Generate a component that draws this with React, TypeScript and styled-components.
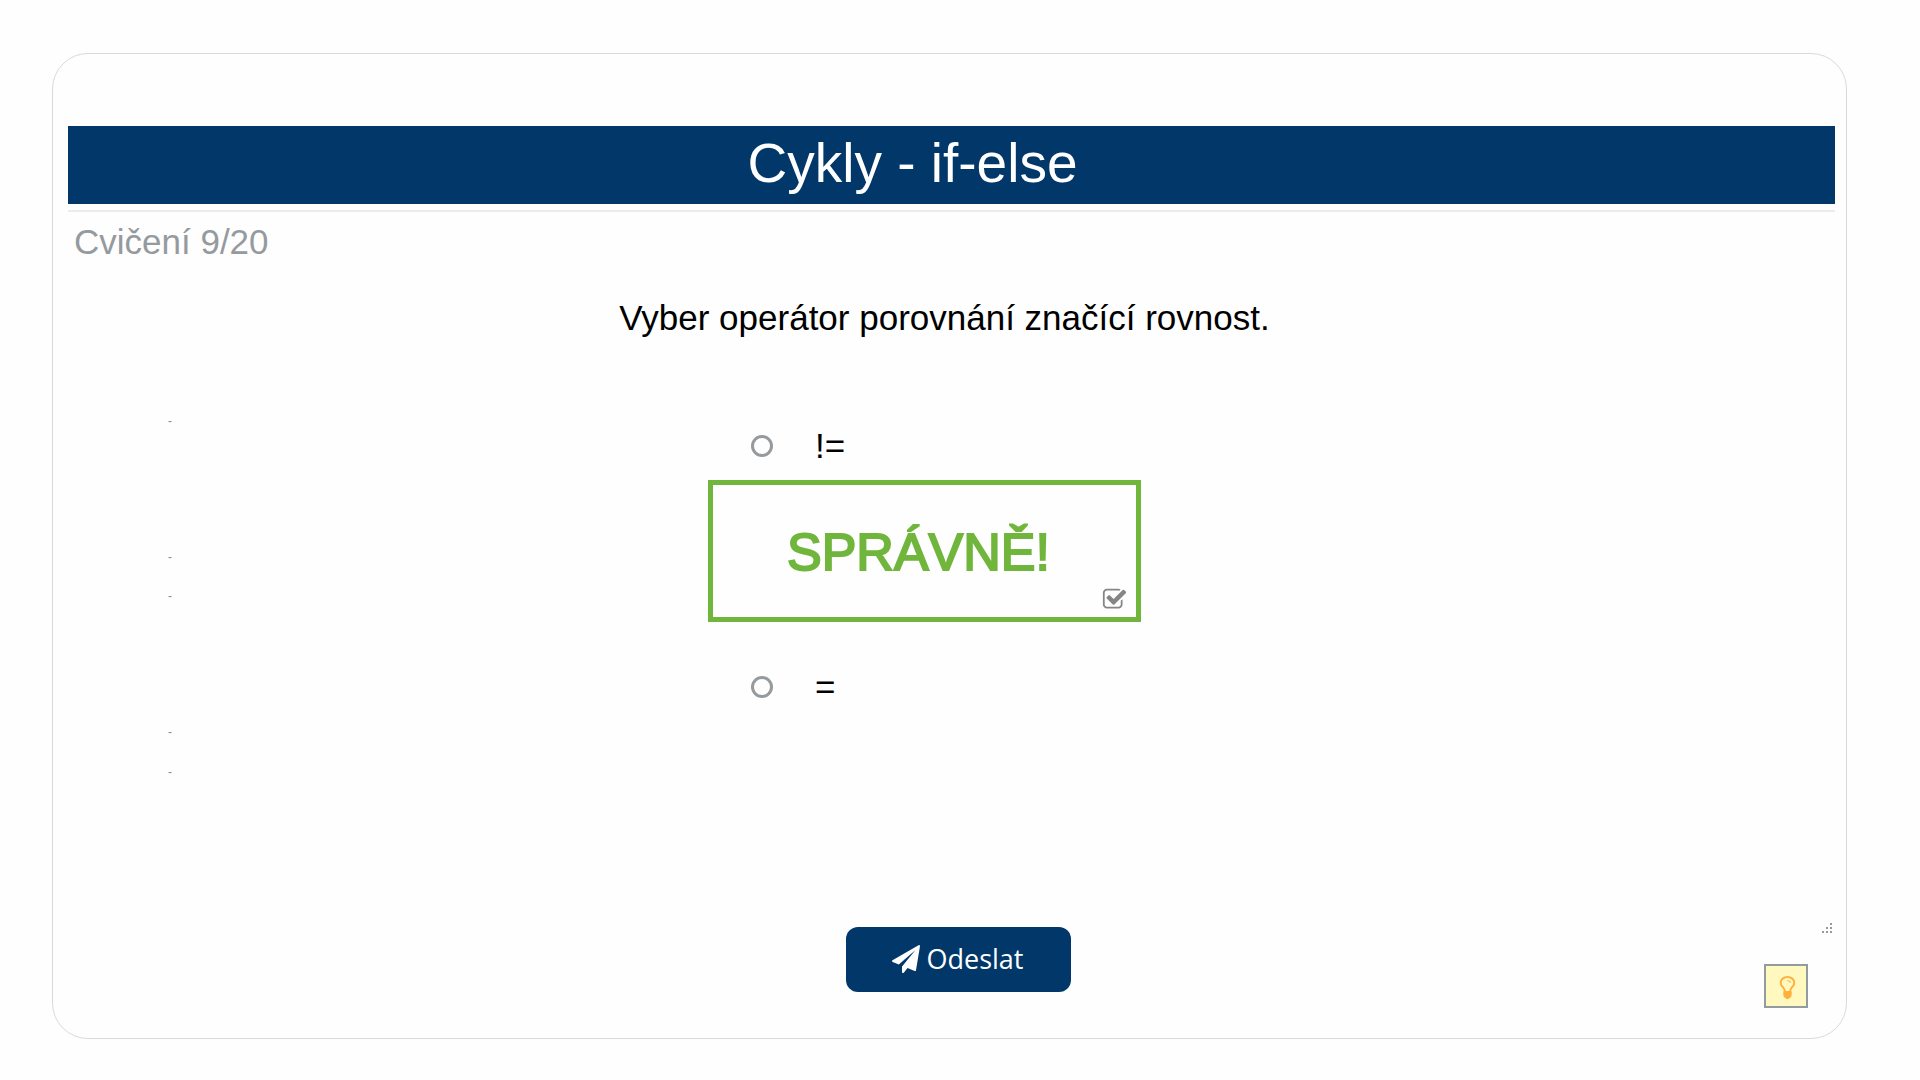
import React from "react";
import styled, { createGlobalStyle } from "styled-components";

const navy = "#013769";
const green = "#71b63c";
const grey = "#959a9e";

const GlobalStyle = createGlobalStyle`
  *, *::before, *::after { box-sizing: border-box; }
  body {
    margin: 0;
    background: #fefefe;
    color: #000;
    font-family: "Liberation Sans", Arial, sans-serif;
  }
`;

const Card = styled.main`
  margin: 53px 73px 40px 52px;
  padding: 72px 11px 30px 15px;
  border: 1px solid #d9dadb;
  border-radius: 36px;
`;

const TitleBar = styled.header`
  padding: 5px 78px 9px 0;
  background: ${navy};
  color: #fff;
  text-align: center;
`;

const Title = styled.h1`
  margin: 0;
  font-size: 55px;
  line-height: 64px;
  font-weight: 400;
`;

const Divider = styled.hr`
  height: 2px;
  margin: 6px 0 10px;
  border: 0;
  background: #ececec;
`;

const Progress = styled.p`
  margin: 0 0 36px;
  padding-left: 6px;
  color: ${grey};
  font-size: 35px;
  line-height: 40px;
`;

const Question = styled.h2`
  margin: 0;
  padding-right: 14px;
  font-size: 35px;
  line-height: 40px;
  font-weight: 400;
  text-align: center;
`;

const Body = styled.div`
  display: grid;
  grid-template-columns: 1fr 433px 1fr;
  padding: 77px 54px 145px 0;
`;

const Marks = styled.ul`
  margin: 0;
  padding: 0 0 0 100px;
  list-style: none;
  color: #888;
  font-size: 12px;
  line-height: 12px;
`;

const Mark = styled.li<{ $gap: number }>`
  margin-top: ${(p) => p.$gap}px;
`;

const Answers = styled.form`
  padding-top: 11px;
`;

const Option = styled.label`
  display: flex;
  align-items: center;
  gap: 42px;
  padding-left: 43px;
  font-size: 35px;
  line-height: 40px;
`;

const Radio = styled.input`
  appearance: none;
  width: 22px;
  height: 22px;
  margin: 0;
  border: 3px solid ${grey};
  border-radius: 50%;
  &:checked {
    background: ${grey};
  }
`;

const Result = styled.div`
  position: relative;
  margin: 14px 0 45px;
  padding: 37px 12px 35px 0;
  border: 5px solid ${green};
  color: ${green};
  font-size: 52px;
  line-height: 60px;
  text-align: center;
  -webkit-text-stroke: 2px ${green};
`;

const CheckMark = styled.svg`
  position: absolute;
  right: 9px;
  bottom: 5px;
  width: 25px;
  height: 25px;
  fill: #858585;
`;

const Footer = styled.footer`
  display: grid;
  grid-template-columns: 1fr 225px 1fr;
  align-items: start;
  padding-left: 14px;
`;

const SendButton = styled.button`
  grid-column: 2;
  display: flex;
  align-items: center;
  justify-content: center;
  gap: 7px;
  height: 65px;
  margin-top: 4px;
  padding: 0 2px 2px 0;
  border: 0;
  border-radius: 12px;
  background: ${navy};
  color: #fff;
  font-family: "Open Sans", sans-serif;
  font-size: 27px;
  line-height: 36px;
`;

const SendIcon = styled.svg`
  width: 28px;
  height: 28px;
  fill: #fff;
`;

const Tools = styled.div`
  display: flex;
  flex-direction: column;
  align-items: flex-end;
  gap: 31px;
  padding-right: 3px;
`;

const Grip = styled.svg`
  width: 10px;
  height: 10px;
  fill: #999;
`;

const HintButton = styled.button`
  display: grid;
  place-items: center;
  width: 44px;
  height: 44px;
  margin-right: 24px;
  padding: 2px 0 0 3px;
  border: 2px solid #929b9f;
  background: #fff9bf;
`;

const HintIcon = styled.svg`
  width: 27px;
  height: 27px;
  fill: #ffaf3c;
`;

const markGaps = [0, 124, 27, 124, 28];

export default function App() {
  return (
    <>
      <GlobalStyle />
      <Card>
        <TitleBar>
          <Title>Cykly - if-else</Title>
        </TitleBar>
        <Divider />
        <Progress>Cvičení 9/20</Progress>
        <Question>Vyber operátor porovnání značící rovnost.</Question>
        <Body>
          <Marks>
            {markGaps.map((gap, i) => (
              <Mark key={i} $gap={gap}>-</Mark>
            ))}
          </Marks>
          <Answers id="answers" onSubmit={(e) => e.preventDefault()}>
            <Option>
              <Radio type="radio" name="operator" value="ne" />
              !=
            </Option>
            <Result role="status">
              SPRÁVNĚ!
              <CheckMark viewBox="0 0 1792 1792" aria-hidden="true">
                <path stroke="none" d="M1472 930v318q0 119-84.5 203.5t-203.5 84.5h-832q-119 0-203.5-84.5t-84.5-203.5v-832q0-119 84.5-203.5t203.5-84.5h832q63 0 117 25 15 7 18 23 3 17-9 29l-49 49q-10 10-23 10-3 0-9-2-23-6-45-6h-832q-66 0-113 47t-47 113v832q0 66 47 113t113 47h832q66 0 113-47t47-113v-254q0-13 9-22l64-64q10-10 23-10 6 0 12 3 20 8 20 29zm231-489l-814 814q-24 24-57 24t-57-24l-430-430q-24-24-24-57t24-57l110-110q24-24 57-24t57 24l263 263 647-647q24-24 57-24t57 24l110 110q24 24 24 57t-24 57z" />
              </CheckMark>
            </Result>
            <Option>
              <Radio type="radio" name="operator" value="assign" />
              =
            </Option>
          </Answers>
        </Body>
        <Footer>
          <SendButton type="submit" form="answers">
            <SendIcon viewBox="0 0 1792 1792" aria-hidden="true">
              <path d="M1764 11q33 24 27 64l-256 1536q-5 29-32 45-14 8-31 8-11 0-24-5l-453-185-242 295q-18 23-49 23-13 0-22-4-19-7-30.5-23.5t-11.5-36.5v-349l864-1059-1069 925-395-162q-37-14-40-55-2-40 32-59l1664-960q15-9 32-9 20 0 36 11z" />
            </SendIcon>
            Odeslat
          </SendButton>
          <Tools>
            <Grip viewBox="0 0 10 10" aria-hidden="true">
              <path d="M8 0h2v2h-2zM4 4h2v2h-2zM8 4h2v2h-2zM0 8h2v2h-2zM4 8h2v2h-2zM8 8h2v2h-2z" />
            </Grip>
            <HintButton type="button" aria-label="Nápověda">
              <HintIcon viewBox="0 0 1792 1792" aria-hidden="true">
                <path d="M1120 576q0 13-9.5 22.5t-22.5 9.5-22.5-9.5-9.5-22.5q0-46-54-71t-106-25q-13 0-22.5-9.5t-9.5-22.5 9.5-22.5 22.5-9.5q50 0 99.5 16t87 54 37.5 90zm160 0q0-72-34.5-134t-90-101.5-123-62-136.5-22.5-136.5 22.5-123 62-90 101.5-34.5 134q0 101 68 180 10 11 30.5 33t30.5 33q128 153 141 298h228q13-145 141-298 10-11 30.5-33t30.5-33q68-79 68-180zm128 0q0 155-103 268-45 49-74.5 87t-59.5 95.5-34 107.5q47 28 47 82 0 37-25 64 25 27 25 64 0 52-45 81 13 23 13 47 0 46-31.5 71t-77.5 25q-20 44-60 70t-87 26-87-26-60-70q-46 0-77.5-25t-31.5-71q0-24 13-47-45-29-45-81 0-37 25-64-25-27-25-64 0-54 47-82-4-50-34-107.5t-59.5-95.5-74.5-87q-103-113-103-268 0-99 44.5-184.5t117-142 164-89 186.5-32.5 186.5 32.5 164 89 117 142 44.5 184.5z" />
                <path d="M768 1130h256l40 60v270l-100 110h-136l-100-110v-270z" />
              </HintIcon>
            </HintButton>
          </Tools>
        </Footer>
      </Card>
    </>
  );
}
